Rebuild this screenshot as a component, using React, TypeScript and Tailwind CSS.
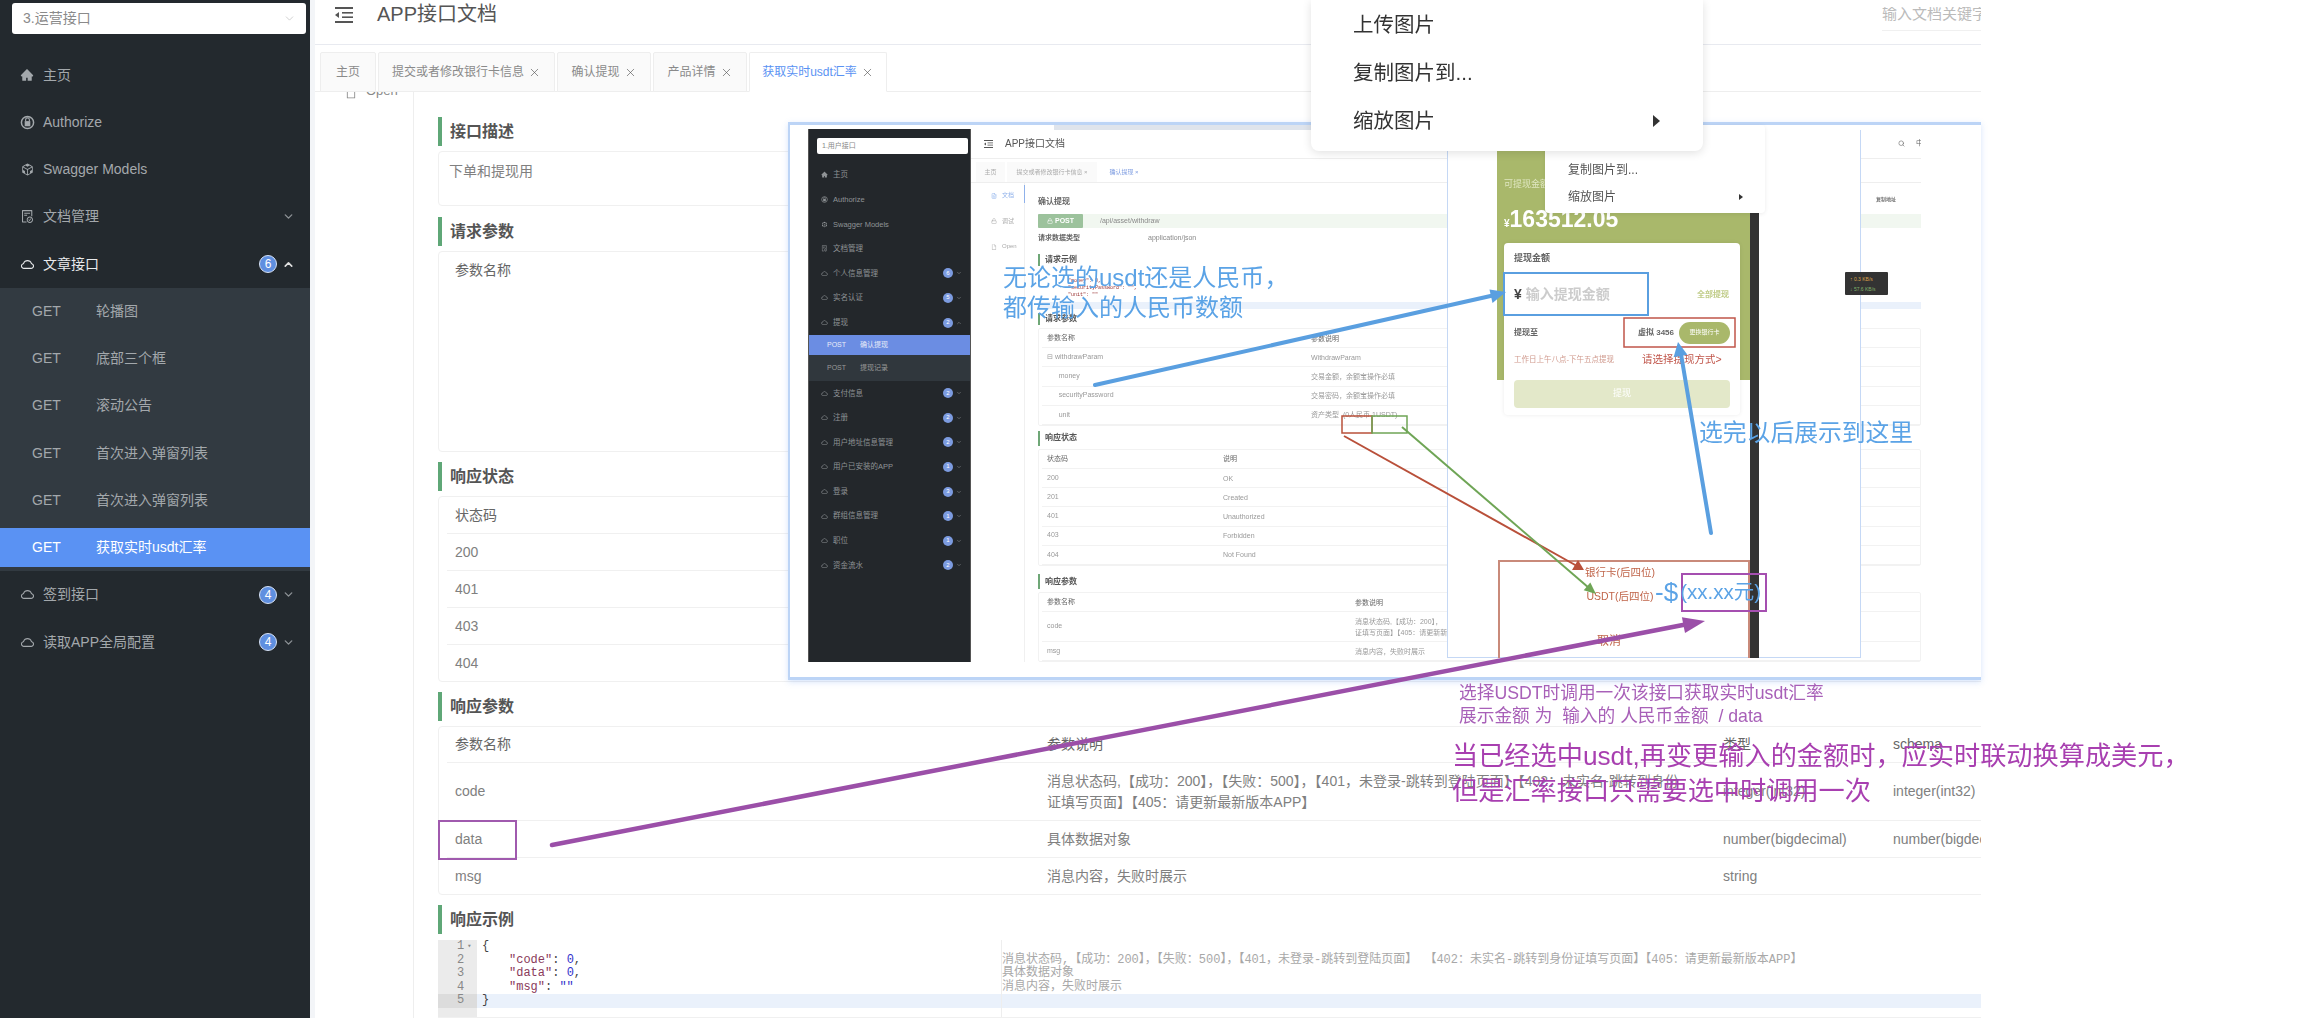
import { ChevronDown, ChevronUp, X, Search, FileText, Lock } from "lucide-react"
import { AiFillHome, AiOutlineCloud, AiOutlineCodeSandbox, AiOutlineFileDone, AiOutlineFile } from "react-icons/ai"
import type { ReactNode } from "react"

const CLOUD = <AiOutlineCloud size={15} />
// full-width punctuation
const C = "\uFF0C"
const Q = "\uFF1A"

function LockIcon({ size = 15 }: { size?: number }) {
  return (
    <svg width={size} height={size} viewBox="0 0 16 16">
      <circle cx="8" cy="8" r="6.5" fill="none" stroke="currentColor" strokeWidth="1.6" />
      <rect x="5" y="6.5" width="6" height="5.5" fill="currentColor" />
      <path d="M6 6.5V5a2 2 0 0 1 4 0v1.5" fill="none" stroke="currentColor" strokeWidth="1.2" />
    </svg>
  )
}

function Outdent({ w = 18, h = 16 }: { w?: number; h?: number }) {
  return (
    <svg width={w} height={h} viewBox="0 0 18 16" fill="#555" className="shrink-0">
      <rect x="0" y="0" width="18" height="2" />
      <rect x="7" y="5" width="11" height="1.6" />
      <rect x="7" y="9.4" width="11" height="1.6" />
      <rect x="0" y="14" width="18" height="2" />
      <path d="M0 8l4-3v6z" />
    </svg>
  )
}

function MenuRow({ icon, label, badge, open, active }: { icon: ReactNode; label: string; badge?: number; open?: boolean; active?: boolean }) {
  return (
    <div className={`flex h-[47.25px] items-center pl-[20px] pr-[15px] text-[14px] ${active ? "text-[#e8eaec]" : "text-[#a3a8ac]"}`}>
      <span className="flex w-[23px] shrink-0">{icon}</span>
      <span className="flex-1">{label}</span>
      {badge !== undefined && (
        <span className="mr-[5px] flex h-[18px] w-[18px] items-center justify-center rounded-full border border-[#d7e2f5] bg-[#5f8fe0] text-[12px] text-white">
          {badge}
        </span>
      )}
      {open === undefined ? null : open ? (
        <ChevronUp size={13} strokeWidth={3} className="text-[#e0e0e0]" />
      ) : (
        <ChevronDown size={13} strokeWidth={2.5} className="text-[#8d9296]" />
      )}
    </div>
  )
}

function Sidebar() {
  const subs = ["轮播图", "底部三个框", "滚动公告", "首次进入弹窗列表", "首次进入弹窗列表"]
  return (
    <aside className="flex h-full w-[310px] shrink-0 flex-col bg-[#23292e]">
      <div className="mb-[17.5px] ml-[12px] mr-[4px] mt-[3px] flex h-[31px] items-center justify-between rounded-[3px] bg-white pl-[11px] pr-[10px] text-[14px] text-[#8a8a8a]">
        3.运营接口
        <ChevronDown size={13} strokeWidth={1} className="text-[#aaa]" />
      </div>
      <MenuRow icon={<AiFillHome size={14} />} label="主页" />
      <MenuRow icon={<LockIcon />} label="Authorize" />
      <MenuRow icon={<AiOutlineCodeSandbox size={15} />} label="Swagger Models" />
      <MenuRow icon={<AiOutlineFileDone size={15} />} label="文档管理" open={false} />
      <MenuRow icon={CLOUD} label="文章接口" badge={6} open active />
      <div className="bg-[#323a41]">
        {subs.map((s, i) => (
          <div key={i} className="flex h-[47.25px] items-center pl-[32px] text-[14px] text-[#a3a8ac]">
            <span className="w-[64px]">GET</span>
            {s}
          </div>
        ))}
        <div className="flex h-[47.25px] items-center py-[4px]">
          <div className="flex h-full w-full items-center bg-[#5a92f3] pl-[32px] text-[14px] text-white">
            <span className="w-[64px]">GET</span>
            获取实时usdt汇率
          </div>
        </div>
      </div>
      <MenuRow icon={CLOUD} label="签到接口" badge={4} open={false} />
      <MenuRow icon={CLOUD} label="读取APP全局配置" badge={4} open={false} />
    </aside>
  )
}

function Tab({ label, close, active, w }: { label: string; close?: boolean; active?: boolean; w: string }) {
  return (
    <div
      className={`flex h-[40px] items-center justify-center gap-[4px] rounded-t-[2px] border border-[#eeeeee] text-[12px] ${w} ${
        active ? "border-b-white bg-white text-[#5a92f3]" : "bg-[#fafafa] text-[#8a8a8a]"
      }`}
    >
      {label}
      {close && <X size={13} strokeWidth={1.2} className="text-[#555]" />}
    </div>
  )
}

function SectionTitle({ children }: { children: string }) {
  return (
    <div className="flex h-[29px] items-center border-l-[4px] border-[#5fa777] pl-[8px] text-[16px] font-bold text-[#555]">
      {children}
    </div>
  )
}

function Card({ children, className = "" }: { children: ReactNode; className?: string }) {
  return <div className={`mt-[5px] w-[1600px] rounded-[4px] border border-[#f0f0f0] ${className}`}>{children}</div>
}

function Row({ cells, h, head }: { cells: string[]; h: string; head?: boolean }) {
  return (
    <div className={`ml-[8px] grid grid-cols-[600px_676px_170px_1fr] items-center border-b border-[#f0f0f0] last:border-b-0 ${h} text-[14px] ${head ? "text-[#666]" : "text-[#808080]"}`}>
      {cells.map((c, i) => (
        <div key={i} className={`${i === 0 ? "pl-[8px]" : ""} ${i === 1 ? "pr-[42px]" : ""} leading-[21px]`}>{c}</div>
      ))}
    </div>
  )
}

const codeLines: [ReactNode, string][] = [
  ["{", ""],
  [
    <><span className="pl-[27px] text-[#8a3a5a]">"code"</span>: <span className="text-[#33c]">0</span>,</>,
    `消息状态码,【成功${Q}200】${C}【失败${Q}500】${C}【401${C}未登录-跳转到登陆页面】 【402${Q}未实名-跳转到身份证填写页面】【405${Q}请更新最新版本APP】`,
  ],
  [<><span className="pl-[27px] text-[#8a3a5a]">"data"</span>: <span className="text-[#33c]">0</span>,</>, "具体数据对象"],
  [<><span className="pl-[27px] text-[#8a3a5a]">"msg"</span>: <span className="text-[#33c]">""</span></>, `消息内容${C}失败时展示`],
  ["}", ""],
]

function Editor() {
  return (
    <div className="mt-[6px] flex w-[1600px] flex-1 flex-col border-b border-[#f0f0f0] font-['Liberation_Mono','Noto_Sans_CJK_SC',monospace] text-[12px]">
      {codeLines.map(([code, comment], i) => (
        <div key={i} className={`flex h-[13.5px] items-center leading-[13.5px] ${i === 4 ? "bg-[#eaf1fb]" : ""}`}>
          <div className={`flex h-full w-[39px] shrink-0 gap-[3px] pl-[19px] text-[#888] ${i === 4 ? "bg-[#dcdcdc]" : "bg-[#ebebeb]"}`}>
            {i + 1}
            {i === 0 && <span className="text-[7px]">▾</span>}
          </div>
          <div className="w-[524px] shrink-0 whitespace-pre pl-[5px] text-[#444]">{code}</div>
          <div className="h-full whitespace-nowrap border-l border-[#eee] text-[12px] text-[#a8a8a8]">{comment}</div>
        </div>
      ))}
      <div className="flex flex-1">
        <div className="w-[39px] bg-[#ebebeb]" />
        <div className="w-[524px]" />
        <div className="border-l border-[#eee]" />
      </div>
    </div>
  )
}

function MainPage() {
  return (
    <main className="flex h-full w-[1666px] shrink-0 flex-col overflow-hidden bg-white">
      <header className="flex h-[45px] shrink-0 items-start border-b border-[#e8eaf0] pl-[20px] pt-[7px]">
        <Outdent />
        <span className="ml-[24px] -translate-y-[6px] text-[20px] leading-[26px] text-[#555]">APP接口文档</span>
        <div className="ml-auto h-[24px] w-[99px] overflow-hidden whitespace-nowrap border-b border-[#f0f0f0] text-[15px] leading-[14px] text-[#bbb]">输入文档关键字搜索</div>
      </header>
      <div className="flex h-[47px] shrink-0 items-start gap-[2px] border-b border-[#eeeeee] pl-[5px] pt-[7px]">
        <Tab label="主页" w="w-[56px]" />
        <Tab label="提交或者修改银行卡信息" close w="w-[177px]" />
        <Tab label="确认提现" close w="w-[94px]" />
        <Tab label="产品详情" close w="w-[94px]" />
        <Tab label="获取实时usdt汇率" close active w="w-[138px]" />
      </div>
      <div className="flex min-h-0 flex-1">
        <div className="w-[99px] shrink-0 border-r border-[#eeeeee]">
          <div className="flex h-[7px] items-end gap-[9px] overflow-hidden pl-[30px] text-[13px] leading-[16px] text-[#888]">
            <AiOutlineFile size={12} className="shrink-0" />
            <span>Open</span>
          </div>
        </div>
        <div className="flex min-w-0 flex-1 flex-col pl-[24px] pt-[25px]">
          <SectionTitle>接口描述</SectionTitle>
          <Card className="mb-[11px] h-[55px] pl-[10px] pt-[9px] text-[14px] leading-[21px] text-[#808080]">下单和提现用</Card>
          <SectionTitle>请求参数</SectionTitle>
          <Card className="mb-[10px] h-[201px]">
            <Row cells={["参数名称"]} h="h-[37px]" head />
          </Card>
          <SectionTitle>响应状态</SectionTitle>
          <Card className="mb-[10px]">
            <Row cells={["状态码"]} h="h-[37px]" head />
            {["200", "401", "403"].map((c) => (
              <Row key={c} cells={[c]} h="h-[37px]" />
            ))}
            <Row cells={["404"]} h="h-[36px]" />
          </Card>
          <SectionTitle>响应参数</SectionTitle>
          <Card className="mb-[10px]">
            <Row cells={["参数名称", "参数说明", "类型", "schema"]} h="h-[36px]" head />
            <Row
              cells={[
                "code",
                `消息状态码,【成功${Q}200】${C}【失败${Q}500】${C}【401${C}未登录-跳转到登陆页面】【402${Q}未实名-跳转到身份证填写页面】【405${Q}请更新最新版本APP】`,
                "integer(int32)",
                "integer(int32)",
              ]}
              h="h-[58px]"
            />
            <Row cells={["data", "具体数据对象", "number(bigdecimal)", "number(bigdecimal)"]} h="h-[37px]" />
            <Row cells={["msg", `消息内容${C}失败时展示`, "string"]} h="h-[36px]" />
          </Card>
          <SectionTitle>响应示例</SectionTitle>
          <Editor />
        </div>
      </div>
    </main>
  )
}

function MiniMenu({ label, badge, open, icon }: { label: string; badge?: number; open?: boolean; icon?: ReactNode }) {
  return (
    <div className="flex h-[24.6px] items-center pl-[12px] pr-[8px] text-[7.5px] text-[#8f9396]">
      <span className="w-[12px] shrink-0">{icon ?? <AiOutlineCloud size={7} />}</span>
      <span className="flex-1">{label}</span>
      {badge !== undefined && (
        <span className="mr-[3px] flex h-[10px] w-[10px] items-center justify-center rounded-full bg-[#7c9be0] text-[6px] text-white">{badge}</span>
      )}
      {badge !== undefined && (open ? <ChevronUp size={6} /> : <ChevronDown size={6} />)}
    </div>
  )
}

function MiniSidebar() {
  return (
    <div className="flex h-full w-[163px] shrink-0 flex-col border-x border-[#555] bg-[#23272b]">
      <div className="mb-[8.7px] ml-[8px] mr-[2px] mt-[9px] flex h-[16px] items-center rounded-[2px] bg-white pl-[5px] text-[7px] text-[#888]">1.用户接口</div>
      <MiniMenu label="主页" icon={<AiFillHome size={7} />} />
      <MiniMenu label="Authorize" icon={<LockIcon size={7} />} />
      <MiniMenu label="Swagger Models" icon={<AiOutlineCodeSandbox size={7} />} />
      <MiniMenu label="文档管理" icon={<AiOutlineFileDone size={7} />} />
      <MiniMenu label="个人信息管理" badge={6} />
      <MiniMenu label="实名认证" badge={5} />
      <MiniMenu label="提现" badge={2} open />
      <div className="flex h-[20px] items-center bg-[#6b8de3] pl-[18px] text-[7px] text-[#e8ecf8]"><span className="w-[33px]">POST</span>确认提现</div>
      <div className="flex h-[26px] items-center bg-[#30373d] pl-[18px] text-[7px] text-[#999]"><span className="w-[33px]">POST</span>提现记录</div>
      {[
        ["支付信息", 2], ["注册", 2], ["用户地址信息管理", 2], ["用户已安装的APP", 1], ["登录", 3], ["群组信息管理", 1], ["职位", 1], ["资金流水", 2],
      ].map(([l, b]) => (
        <MiniMenu key={l} label={l as string} badge={b as number} />
      ))}
    </div>
  )
}

function MiniHead({ children }: { children: string }) {
  return <div className="flex h-[15px] items-center border-l-[2px] border-[#6fa777] pl-[5px] text-[8px] font-bold text-[#555]">{children}</div>
}

function MiniRows({ col, rows, heights }: { col: number; rows: ReactNode[][]; heights?: number[] }) {
  return (
    <div className="mt-[3px] w-[883px] rounded-[2px] border border-[#f2f2f2] pl-[3px]">
      {rows.map((r, i) => (
        <div key={i} style={{ height: heights?.[i] ?? 19.2 }} className="flex items-center border-b border-[#f2f2f2] pl-[5px] text-[7px] text-[#999]">
          <div style={{ width: col }} className={`shrink-0 whitespace-pre ${i === 0 ? "text-[#666]" : ""}`}>{r[0]}</div>
          <div className={`whitespace-pre leading-[11px] ${i === 0 ? "text-[#666]" : ""}`}>{r[1]}</div>
        </div>
      ))}
    </div>
  )
}

function MiniContent() {
  return (
    <div className="flex min-w-0 flex-1 flex-col">
      <div className="flex h-[30px] shrink-0 items-center whitespace-nowrap border-b border-[#eee] pl-[13px]">
        <Outdent w={9} h={8} />
        <span className="ml-[12px] text-[10px] text-[#555]">APP接口文档</span>
        <Search size={7} className="ml-auto shrink-0 text-[#666]" />
        <span className="ml-[11px] mr-[-2px] text-[7px] text-[#666]">中</span>
      </div>
      <div className="flex h-[24px] shrink-0 items-end gap-[2px] border-b border-[#eee] pl-[5px] text-[6px] text-[#aaa]">
        <div className="flex h-[20px] w-[29px] items-center justify-center bg-[#fafafa]">主页</div>
        <div className="flex h-[20px] w-[90px] items-center justify-center bg-[#fafafa]">提交或者修改银行卡信息 ×</div>
        <div className="flex h-[20px] w-[50px] items-center justify-center text-[#7c9be0]">确认提现 ×</div>
      </div>
      <div className="flex min-h-0 flex-1">
        <div className="relative w-[54px] shrink-0 border-r border-[#f0f0f0] pl-[20px] text-[6px] leading-[25.5px] text-[#aaa]">
          <div className="flex items-center gap-[5px] text-[#8fb1ea]"><FileText size={6} />文档</div>
          <div className="flex items-center gap-[5px]"><Lock size={6} />调试</div>
          <div className="flex items-center gap-[5px]"><AiOutlineFile size={6} />Open</div>
          <div className="absolute -right-px top-[2px] h-[18px] w-px bg-[#8fb1ea]" />
        </div>
        <div className="flex min-w-0 flex-1 flex-col pl-[13px] pt-[11px] text-[7px] text-[#888]">
          <div className="h-[16px] text-[8px] font-bold leading-[16px] text-[#666]">确认提现</div>
          <div className="mt-[4px] flex h-[17px] w-[883px] items-center bg-[#f1f7f0]">
            <div className="flex h-full w-[45px] items-center justify-center gap-[2px] rounded-[1px] bg-[#9cc29c] text-[7px] font-bold text-white"><Lock size={6} />POST</div>
            <span className="ml-[17px]">/api/asset/withdraw</span>
          </div>
          <div className="mt-[4px] flex h-[16px] items-center">
            <span className="w-[110px] font-bold text-[#666]">请求数据类型</span>
            application/json
          </div>
          <div className="mt-[9px] flex h-[14px] items-center border-l-[2px] border-[#6fa777] pl-[5px] text-[8px] font-bold text-[#555]">请求示例</div>
          <div className="h-[54px] w-[883px] pt-[12px] font-['Liberation_Mono',monospace] text-[5px] leading-[7px] text-[#933]">
            <div className="pl-[30px]">"money": 0,</div>
            <div className="pl-[30px]">"securityPassword": "",</div>
            <div className="pl-[30px]">"unit": ""</div>
            <div className="mt-[3px] h-[7px] w-full bg-[#eaf1fb]" />
          </div>
          <MiniHead>请求参数</MiniHead>
          <MiniRows
            col={264}
            rows={[
              ["参数名称", "参数说明"],
              ["⊟ withdrawParam", "WithdrawParam"],
              ["      money", `交易金额${C}余额宝操作必填`],
              ["      securityPassword", `交易密码${C}余额宝操作必填`],
              ["      unit", "资产类型  (0人民币 1USDT)"],
            ]}
          />
          <div className="mt-[5px]"><MiniHead>响应状态</MiniHead></div>
          <MiniRows
            col={176}
            rows={[["状态码", "说明"], ["200", "OK"], ["201", "Created"], ["401", "Unauthorized"], ["403", "Forbidden"], ["404", "Not Found"]]}
          />
          <div className="mt-[8px]"><MiniHead>响应参数</MiniHead></div>
          <MiniRows
            col={308}
            heights={[19, 30, 19]}
            rows={[
              ["参数名称", "参数说明"],
              ["code", `消息状态码,【成功${Q}200】${C}\n证填写页面】【405${Q}请更新新`],
              ["msg", `消息内容${C}失败时展示`],
            ]}
          />
        </div>
      </div>
    </div>
  )
}

function PhoneShot() {
  return (
    <div className="absolute left-[1447px] top-[130px] h-[528px] w-[414px] border border-t-0 border-[#c5d8f5] bg-white blur-[0.3px]">
      <div className="absolute left-[49px] top-0 flex h-[250px] w-[253px] flex-col bg-[#a9b86b] pl-[7px] text-white">
        <span className="mt-[48px] text-[9px] text-[#dfe6c0]">可提现金额</span>
        <span className="mt-[12px] text-[23px] font-bold leading-[30px]"><span className="text-[10px]">¥</span>163512.05</span>
      </div>
      <div className="absolute left-[302px] top-0 h-[528px] w-[9px] bg-[#333]" />
      <div className="absolute left-[56px] top-[113px] flex h-[172px] w-[236px] flex-col rounded-[4px] bg-white px-[10px] shadow-[0_0_4px_rgba(0,0,0,0.08)]">
        <div className="mt-[9px] text-[9px] font-bold text-[#666]">提现金额</div>
        <div className="mt-[17px] flex h-[24px] items-center text-[14px] font-bold text-[#ccc]">
          <span className="mr-[4px] text-[#444]">¥</span>输入提现金额
          <span className="ml-auto mr-[1px] text-[8px] text-[#c0cc88]">全部提现</span>
        </div>
        <div className="mt-[14px] flex h-[24px] items-center text-[8px] font-bold text-[#666]">
          提现至
          <span className="ml-auto mr-[5px]">虚拟 3456</span>
          <span className="flex h-[22px] w-[51px] items-center justify-center rounded-full bg-[#a9b86b] text-[6px] font-normal text-white">更换银行卡</span>
        </div>
        <div className="mt-[6px] flex h-[18px] items-center text-[7.5px] text-[#d09a8e]">
          工作日上午八点-下午五点提现
          <span className="ml-[28px] text-[10.5px] text-[#c0554a]">请选择提现方式&gt;</span>
        </div>
        <div className="mt-[11px] flex h-[28px] items-center justify-center rounded-[4px] bg-[#e3e8c9] text-[9px] text-white">提现</div>
      </div>
      <div className="absolute left-[50px] top-[430px] flex h-[98px] w-[252px] flex-col items-center border-[2px] border-b-0 border-[#c98a7a] text-[10.5px] text-[#c0654a]">
        <div className="mt-[3px] -translate-x-[4px]">银行卡(后四位)</div>
        <div className="mt-[8px] -translate-x-[4px]">USDT(后四位)</div>
        <div className="mt-[27px] -translate-x-[15px] text-[12px]">取消</div>
      </div>
    </div>
  )
}

function Arrows() {
  return (
    <svg className="absolute left-0 top-0" width="2324" height="1018">
      <rect x="1342" y="416" width="30" height="17" fill="none" stroke="#b9503a" strokeWidth="1.5" />
      <rect x="1372" y="416" width="35" height="17" fill="none" stroke="#6fa556" strokeWidth="1.5" />
      <rect x="1504" y="273" width="144" height="42" fill="none" stroke="#5a9fe0" strokeWidth="2" />
      <rect x="1624" y="318" width="111" height="29" fill="none" stroke="#c0554a" strokeWidth="1.5" />
      <rect x="1682" y="574" width="84" height="37" fill="none" stroke="#a54fb0" strokeWidth="2" />
      <rect x="439" y="821" width="77" height="38" fill="none" stroke="#a05aae" strokeWidth="2" />
      <line x1="1095" y1="385" x2="1495" y2="295" stroke="#5a9fe0" strokeWidth="4" strokeLinecap="round" />
      <polygon points="1506,292 1492.5,303 1489.5,289.5" fill="#5a9fe0" />
      <line x1="1711" y1="533" x2="1681" y2="354" stroke="#5a9fe0" strokeWidth="4" strokeLinecap="round" />
      <polygon points="1678,342 1687.4,354.8 1673.6,357.2" fill="#5a9fe0" />
      <line x1="1344" y1="436" x2="1577" y2="566" stroke="#b9503a" strokeWidth="2" />
      <polygon points="1584,570 1578,560 1572,570" fill="#b9503a" />
      <line x1="1402" y1="427" x2="1589" y2="588" stroke="#6fa556" strokeWidth="2" />
      <polygon points="1596,594 1590.3,582.6 1583.7,590.2" fill="#6fa556" />
      <line x1="552" y1="845" x2="1688" y2="624" stroke="#9b4fa8" strokeWidth="4.5" strokeLinecap="round" />
      <polygon points="1705,621 1685,633 1681.9,617.3" fill="#9b4fa8" />
    </svg>
  )
}

function ContextMenu() {
  return (
    <div className="absolute left-[1311px] top-0 flex h-[151px] w-[392px] flex-col rounded-b-[8px] bg-white pl-[42px] pt-[1px] text-[20.5px] text-[#333] shadow-[0_2px_10px_rgba(0,0,0,0.12)]">
      <div className="h-[48px] leading-[47px]">上传图片</div>
      <div className="h-[48px] leading-[48px]">复制图片到...</div>
      <div className="flex h-[48px] items-center leading-[48px]">
        缩放图片
        <span className="ml-[218px] h-0 w-0 border-y-[6px] border-l-[7px] border-y-transparent border-l-[#333]" />
      </div>
    </div>
  )
}

export default function App() {
  return (
    <div className="relative flex h-[1018px] w-[2324px] overflow-hidden bg-white font-['Liberation_Sans','Noto_Sans_CJK_SC',sans-serif]">
      <Sidebar />
      <div className="h-full w-[5px] shrink-0 bg-[#f3f5f8]" />
      <MainPage />

      {/* pasted screenshot on top of the page */}
      <div className="absolute left-[788px] top-[122px] h-[558px] w-[1193px] border-x-[2px] border-y-[3px] border-r-0 border-[#bcd4f6] bg-white shadow-[0_2px_6px_rgba(90,146,243,0.25)]" />
      <div className="absolute left-[1054px] top-[125px] h-[5px] w-[257px] bg-[#dfe4ec]" />
      <div className="absolute left-[808px] top-[129px] flex h-[533px] w-[1113px] overflow-hidden blur-[0.4px]">
        <MiniSidebar />
        <MiniContent />
      </div>
      <PhoneShot />
      <div className="absolute left-[1845px] top-[272px] h-[23px] w-[43px] rounded-[1px] bg-[#333] pl-[5px] pt-[2px] text-[5px] leading-[10px] text-[#d9a24a]">
        ↑ 0.3 KB/s
        <div className="text-[#7fb069]">↓ 57.6 KB/s</div>
      </div>
      <div className="absolute left-[1876px] top-[196px] text-[5px] font-bold text-[#777]">复制地址</div>
      <div className="absolute left-[1545px] top-[125px] flex h-[88px] w-[220px] flex-col rounded-[4px] bg-white pl-[23px] pt-[33px] text-[12px] text-[#555] shadow-[0_1px_4px_rgba(0,0,0,0.08)]">
        <div className="h-[27px] leading-[24px]">复制图片到...</div>
        <div className="flex items-center leading-[24px]">
          缩放图片
          <span className="ml-[123px] h-0 w-0 border-y-[3px] border-l-[4px] border-y-transparent border-l-[#333]" />
        </div>
      </div>
      <Arrows />

      {/* handwritten notes */}
      <div className="absolute left-[1003px] top-[263px] text-[24px] leading-[30px] text-[#5ba3e6]">
        无论选的usdt还是人民币{C}<br />都传输入的人民币数额
      </div>
      <div className="absolute left-[1699px] top-[418px] text-[23.8px] leading-[30px] text-[#5ba3e6]">选完以后展示到这里</div>
      <div className="absolute left-[1655px] top-[574px] flex items-center gap-[2px] text-[#5ba3e6]">
        <span className="text-[26px] leading-[36px]">-$</span>
        <span className="text-[20.5px] leading-[36px]">(xx.xx元)</span>
      </div>
      <div className="absolute left-[1459px] top-[682px] text-[17.7px] leading-[23px] text-[#a860b8]">
        选择USDT时调用一次该接口获取实时usdt汇率<br />展示金额 为&nbsp; 输入的 人民币金额&nbsp; / data
      </div>
      <div className="absolute left-[1452px] top-[739px] whitespace-nowrap text-[26.2px] leading-[35px] text-[#a83fb0]">
        当已经选中usdt,再变更输入的金额时{C}应实时联动换算成美元{C}<br />但是汇率接口只需要选中时调用一次
      </div>
      <ContextMenu />
    </div>
  )
}
